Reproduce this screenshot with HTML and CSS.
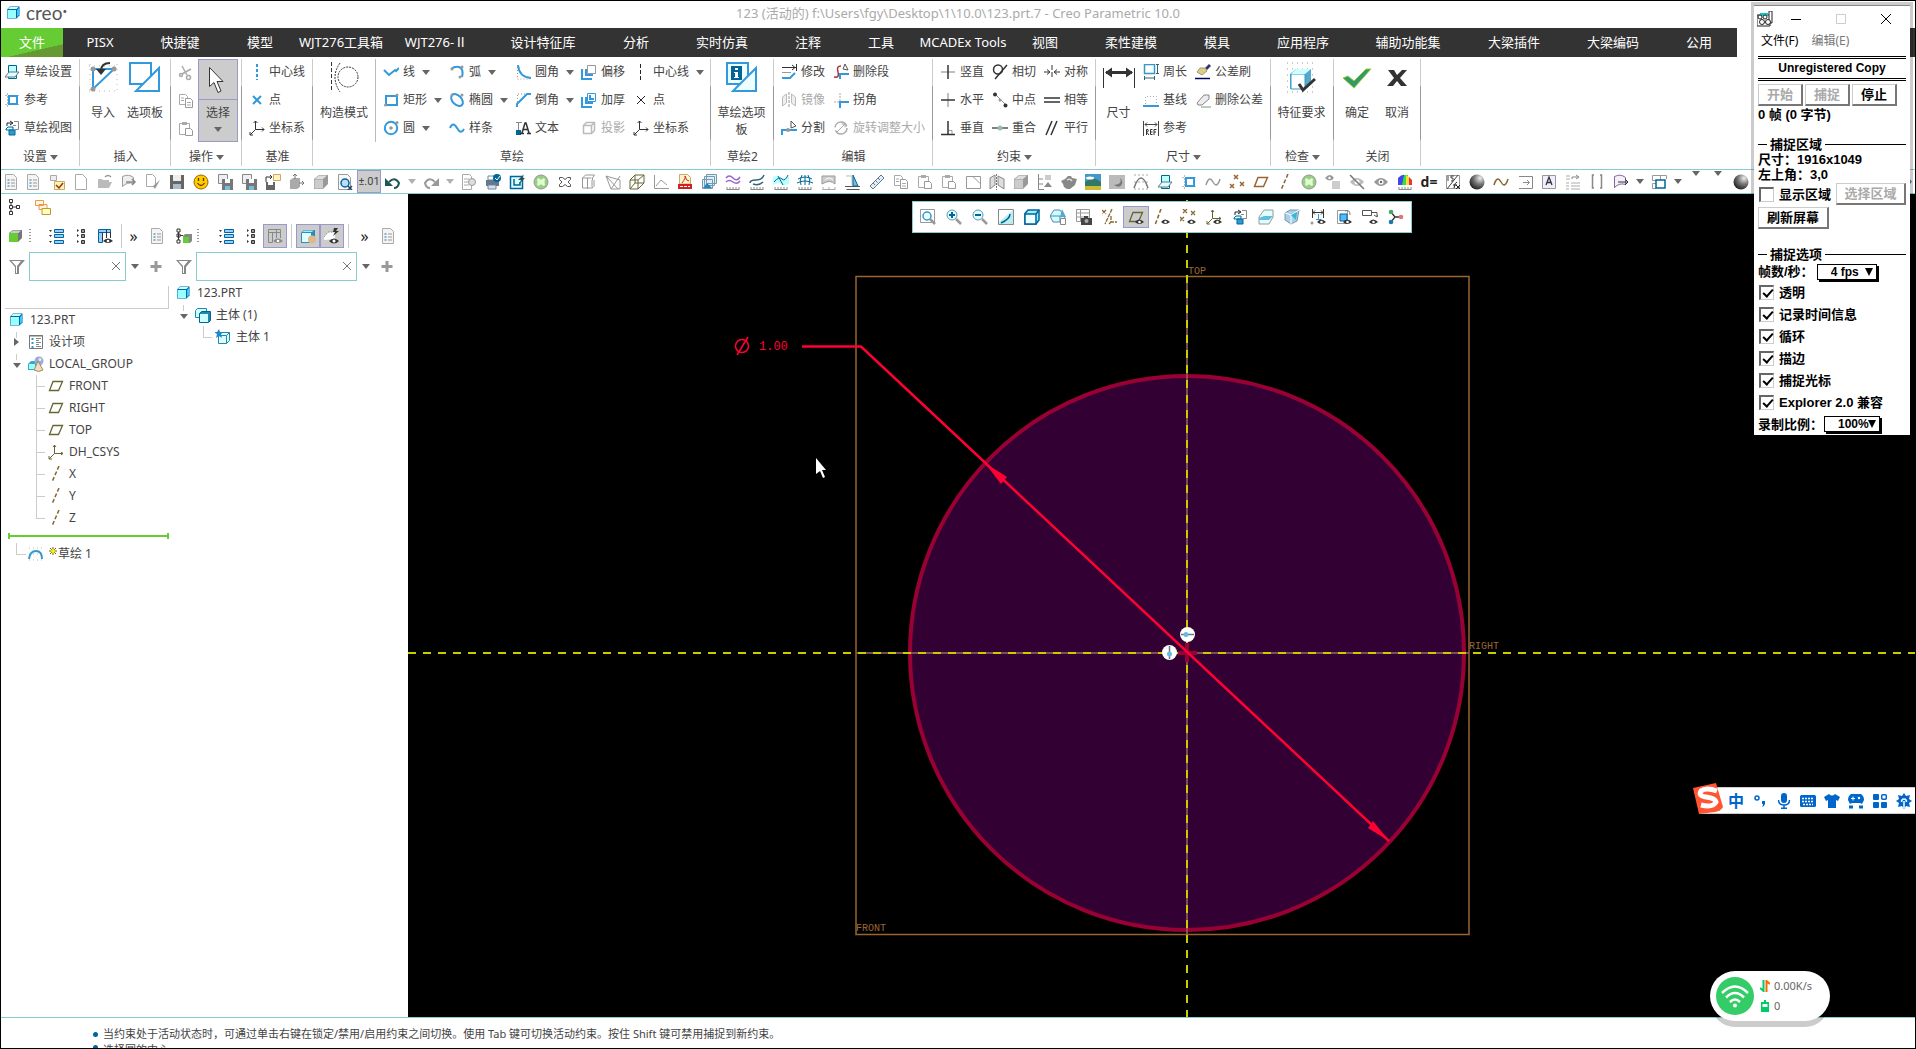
FILE: index.html
```html
<!DOCTYPE html>
<html lang="zh-CN">
  <head>
    <meta charset="UTF-8" />
    <title>Creo Parametric</title>
    <link rel="stylesheet" href="styles.css">
  </head>
  <body>
    <!-- icon sprite -->
    <svg class="sprite" aria-hidden="true">
      <symbol id="down" viewBox="0 0 8 5" preserveAspectRatio="none"><path d="M0 0h8L4 5z" fill="#666"/></symbol>
      <symbol id="cube" viewBox="0 0 16 16"><path d="M1 4.500L4 1.500h9.500v9l-3 3H1z" fill="#06a"/><path d="M1.500 5h8.500v8H1.500z" fill="#9ff"/><path d="M2 4l2-2h8.500L10.500 4z" fill="#cff"/><path d="M11 5l2-2v7l-2 2z" fill="#3cf"/></symbol>
      <symbol id="setup" viewBox="0 0 16 16"><path d="M4.500 1.500h8v13h-8z" fill="#bff" stroke="#069"/><path d="M5 8h10l-4 5H1z" fill="#dff" stroke="#678"/></symbol>
      <symbol id="refs" viewBox="0 0 16 16"><path d="M1 3.500h14M1 12.500h14M3.500 1v14" stroke="#bbb" stroke-dasharray="2 1"/><path d="M5 4h8v8H5z" fill="#fff" stroke="#39d" stroke-width="2"/></symbol>
      <symbol id="sview" viewBox="0 0 16 16"><path d="M3 6V3h5M6 1l3 2-3 2" fill="none" stroke="#222"/><path d="M10 1.500h4.500v8H11M12 5.500h-3" fill="none" stroke="#888"/><path d="M2 9l2-2h5v3H2z" fill="#cff" stroke="#069"/><path d="M5 10h6v5H5z" fill="#39c" stroke="#069"/></symbol>
      <symbol id="import" viewBox="0 0 32 32"><path d="M2 5h29M2 30h29M3 3v28M30 3v28" stroke="#bbb" stroke-dasharray="1 4"/><path d="M6 8h21L6 28z" fill="none" stroke="#39d" stroke-width="2"/><g fill="#999"><circle cx="6" cy="8" r="2.500"/><circle cx="27" cy="8" r="2.500"/><circle cx="6" cy="28" r="2.500"/></g><path d="M23 2q-9 0-9 8" fill="none" stroke="#333" stroke-width="2"/><path d="M9 8h10l-5 6z" fill="#333"/></symbol>
      <symbol id="palette" viewBox="0 0 32 32"><path d="M1 2h21v21H1z" fill="#fff" stroke="#39d" stroke-width="2"/><path d="M30 7v23H7z" fill="#fff" stroke="#39d" stroke-width="2"/></symbol>
      <symbol id="palette-i" viewBox="0 0 32 32"><path d="M1 2h21v21H1z" fill="#eff" stroke="#39d" stroke-width="2"/><path d="M30 7v23H7z" fill="#eff" stroke="#39d" stroke-width="2"/><path d="M5 5h11v14H5z" fill="#069"/><path d="M9 7h3v2H9zM8 11h4v5h1v1H8v-1h1v-4H8z" fill="#fff"/></symbol>
      <symbol id="cut" viewBox="0 0 16 16"><g fill="none" stroke="#aaa" stroke-width="1.500"><path d="M4 1l5 9M13 4L4 9"/><circle cx="10.500" cy="12.500" r="2"/><circle cx="3" cy="10" r="1.500"/></g></symbol>
      <symbol id="copy" viewBox="0 0 16 16"><path d="M1.500 1.500h6l2 2v8h-8z" fill="#fff" stroke="#aaa"/><path d="M7.500 5.500h5l2 2v7h-7z" fill="#fff" stroke="#999"/><path d="M3 5h3M3 7.500h3M9 9.500h4M9 12h4" stroke="#aaa"/></symbol>
      <symbol id="paste" viewBox="0 0 16 16"><path d="M1.500 2.500h10v11h-10z" fill="#fff" stroke="#aaa"/><path d="M4 1h5v3H4z" fill="#aaa"/><path d="M7.500 7.500h5l2 2v5h-7z" fill="#fff" stroke="#999"/></symbol>
      <symbol id="pointer" viewBox="0 0 16 28"><path d="M1.500 1.500v19l4.500-4 4 10 3-1.500-4-9.500h6z" fill="#fff" stroke="#333"/></symbol>
      <symbol id="cline" viewBox="0 0 16 16"><path d="M8 0v16" stroke="#39d" stroke-width="2" stroke-dasharray="3 2"/></symbol>
      <symbol id="cline-k" viewBox="0 0 16 16"><path d="M7.500 0v16" stroke="#222" stroke-width="1" stroke-dasharray="4 2"/></symbol>
      <symbol id="pt" viewBox="0 0 16 16"><path d="M4 4l8 8M12 4l-8 8" stroke="#39d" stroke-width="2"/></symbol>
      <symbol id="pt-k" viewBox="0 0 16 16"><path d="M4 4l8 8M12 4l-8 8" stroke="#222"/></symbol>
      <symbol id="csys" viewBox="0 0 16 16"><path d="M6.500 1v8.500H15M6.500 9.500L1 15M4.500 3l2-2 2 2M13 7.500l2 2-2 2M1 12v3h3" fill="none" stroke="#333"/></symbol>
      <symbol id="csys-o" viewBox="0 0 16 16"><path d="M6.500 1v8.500H15M6.500 9.500L1 15M5 3l1.500-2L8 3M13 8l2 1.500-2 1.500M1 12v3h3" fill="none" stroke="#663"/></symbol>
      <symbol id="constr" viewBox="0 0 32 32"><g fill="none" stroke="#333" stroke-dasharray="2 1"><path d="M3.500 1v30" stroke-dasharray="4 2"/><path d="M12 2q-10 14 0 29"/><circle cx="20" cy="16" r="10"/></g></symbol>
      <symbol id="line" viewBox="0 0 16 16"><path d="M1 6l5 5 6-5 0 0 1 1 3-3" fill="none" stroke="#39d" stroke-width="2"/></symbol>
      <symbol id="arc" viewBox="0 0 16 16"><path d="M2 5q4-3 8-2 5 2 3 10" fill="none" stroke="#39d" stroke-width="2"/><g fill="#999"><circle cx="3" cy="5" r="1.500"/><circle cx="13" cy="3" r="1.500"/><circle cx="11" cy="13" r="1.500"/></g></symbol>
      <symbol id="fillet" viewBox="0 0 16 16"><path d="M2.500 3v12H15" fill="none" stroke="#999" stroke-dasharray="1 2"/><path d="M3 1q1 12 13 13" fill="none" stroke="#39d" stroke-width="2"/></symbol>
      <symbol id="chamfer" viewBox="0 0 16 16"><path d="M3 2h12M2.500 3v12" fill="none" stroke="#999" stroke-dasharray="1 2"/><path d="M2 15v-3L12 2h4" fill="none" stroke="#39d" stroke-width="2"/></symbol>
      <symbol id="offset" viewBox="0 0 16 16"><path d="M6.500 1.500h8v8h-8z" fill="none" stroke="#999"/><path d="M5 5v6h7M1 5v10h10" fill="none" stroke="#39d" stroke-width="2"/></symbol>
      <symbol id="thick" viewBox="0 0 16 16"><path d="M6.500 1.500h8v8h-8z" fill="none" stroke="#39d"/><path d="M5 5v6h7M1 5v10h10M9 3v4h4" fill="none" stroke="#39d" stroke-width="2"/></symbol>
      <symbol id="rect" viewBox="0 0 16 16"><path d="M3 4h11v9H3z" fill="none" stroke="#39d" stroke-width="2"/><circle cx="14" cy="3" r="1.500" fill="#999"/><circle cx="2.500" cy="13" r="1.500" fill="#999"/></symbol>
      <symbol id="ellipse" viewBox="0 0 16 16"><ellipse cx="8" cy="8" rx="7" ry="4.500" transform="rotate(45 8 8)" fill="none" stroke="#39d" stroke-width="2"/><circle cx="3" cy="3" r="1.500" fill="#999"/><circle cx="13" cy="3" r="1.500" fill="#999"/></symbol>
      <symbol id="circle" viewBox="0 0 16 16"><circle cx="8" cy="8" r="6.200" fill="none" stroke="#39d" stroke-width="2"/><circle cx="8" cy="8" r="1.800" fill="#999"/><circle cx="14" cy="2.500" r="1.500" fill="#999"/></symbol>
      <symbol id="spline" viewBox="0 0 16 16"><path d="M1 8q3-7 7 0 4 7 7 1" fill="none" stroke="#39d" stroke-width="2"/></symbol>
      <symbol id="text" viewBox="0 0 16 16"><path d="M1 2.500h6M3.500 3v8" stroke="#888"/><path d="M1 10h5v5H1z" fill="#069"/><path d="M5 13.500h4M7 13l3-10 1 0 3 10M12 13.500h4M8 9.500h5" fill="none" stroke="#333" stroke-width="1.500"/></symbol>
      <symbol id="project" viewBox="0 0 16 16"><path d="M2.500 5.500h8v8h-8zM2.500 5.500l3-3h8v8l-3 3M10.500 5.500l3-3" fill="none" stroke="#bbb" stroke-width="1.500"/></symbol>
      <symbol id="modify" viewBox="0 0 16 16"><path d="M1 3.500h14M11 1l3 2.500L11 6M15.500 0v7" fill="none" stroke="#333"/><path d="M1 8.500h9" stroke="#999"/><path d="M1 14h8l5-5" fill="none" stroke="#39d" stroke-width="2"/></symbol>
      <symbol id="mirror" viewBox="0 0 16 16"><path d="M1.500 5l4-3v9l-4 3zM14.500 5l-4-3v9l4 3z" fill="#eee" stroke="#bbb"/><path d="M8 0v16" stroke="#999" stroke-dasharray="3 1"/></symbol>
      <symbol id="divide" viewBox="0 0 16 16"><path d="M1 15v-5h5" fill="none" stroke="#39d" stroke-width="2"/><path d="M8 10h8" stroke="#39d" stroke-width="2"/><circle cx="7" cy="10" r="2" fill="#999"/><path d="M10 1l5 5-5 2z" fill="#fff" stroke="#555"/></symbol>
      <symbol id="delseg" viewBox="0 0 16 16"><path d="M1 13q6 1 4-5t3-6" fill="none" stroke="#a33" stroke-width="1.500"/><path d="M7 15v-5h9" fill="none" stroke="#39d" stroke-width="2"/><path d="M12 0l3 6-5-1z" fill="#fff" stroke="#555"/></symbol>
      <symbol id="corner" viewBox="0 0 16 16"><path d="M1 10h6M7 1v8" stroke="#aaa" stroke-dasharray="2 1"/><path d="M7 16v-6h9" fill="none" stroke="#39d" stroke-width="2"/></symbol>
      <symbol id="rotate" viewBox="0 0 16 16"><circle cx="8" cy="8" r="6" fill="none" stroke="#aaa" stroke-width="1.500" stroke-dasharray="16 3"/><path d="M4 12l8-8M8.500 4H12v3.500" fill="none" stroke="#aaa"/></symbol>
      <symbol id="vert" viewBox="0 0 16 16"><path d="M1 8h14" stroke="#aaa" stroke-width="1.500"/><path d="M8 1v14" stroke="#333" stroke-width="1.500"/></symbol>
      <symbol id="horz" viewBox="0 0 16 16"><path d="M8 1v14" stroke="#aaa" stroke-width="1.500"/><path d="M1 8h14" stroke="#333" stroke-width="1.500"/></symbol>
      <symbol id="perp" viewBox="0 0 16 16"><path d="M8 1v14M1 14.500h14" stroke="#333" stroke-width="1.500"/><path d="M9 10.500h3V14" fill="none" stroke="#999"/></symbol>
      <symbol id="tangent" viewBox="0 0 16 16"><circle cx="6" cy="5.500" r="4.500" fill="none" stroke="#333" stroke-width="1.500"/><path d="M3 15L15 1" stroke="#333" stroke-width="1.500"/></symbol>
      <symbol id="mid" viewBox="0 0 16 16"><path d="M3 2l11 11" stroke="#888"/><circle cx="3" cy="2.500" r="2" fill="#333"/><circle cx="13.500" cy="13.500" r="2" fill="#333"/><circle cx="8" cy="8" r="1.500" fill="#999"/></symbol>
      <symbol id="coin" viewBox="0 0 16 16"><path d="M0 8h16" stroke="#555" stroke-width="1.500"/><circle cx="8" cy="8" r="2.500" fill="#9bb"/></symbol>
      <symbol id="sym" viewBox="0 0 16 16"><path d="M8 1v14" stroke="#333" stroke-dasharray="5 2"/><path d="M0 8h5M16 8h-5M3 5.500L6 8l-3 2.500M13 5.500L10 8l3 2.500" fill="none" stroke="#333"/></symbol>
      <symbol id="equal" viewBox="0 0 16 16"><path d="M0 6h16M0 10h16" stroke="#333" stroke-width="1.500"/></symbol>
      <symbol id="para" viewBox="0 0 16 16"><path d="M2 15L8 1M7 15l6-14" stroke="#333" stroke-width="1.500"/></symbol>
      <symbol id="dim" viewBox="0 0 32 32"><path d="M.5 7v20M31.500 7v20" stroke="#333"/><path d="M3 11.500h26" stroke="#333" stroke-width="3"/><path d="M2 11.500l7-5v10zM30 11.500l-7-5v10z" fill="#333"/></symbol>
      <symbol id="perim" viewBox="0 0 16 16"><path d="M1.500.5h10v9h-10z" fill="none" stroke="#39c" stroke-width="1.500"/><path d="M13 .5h3M13 9.500h3M14.500 1v8M1.500 12v4M11.500 12v4M2 14h9" stroke="#366"/></symbol>
      <symbol id="base" viewBox="0 0 16 16"><path d="M2.500 12V4.500h11V12" fill="none" stroke="#aaa" stroke-dasharray="1 2"/><path d="M0 14h16" stroke="#39d" stroke-width="2"/></symbol>
      <symbol id="ref" viewBox="0 0 16 16"><path d="M.5 1v15M15.500 1v15M2 4.500h12M4 2.500l-2 2 2 2M12 2.500l2 2-2 2" fill="none" stroke="#444"/><path d="M3.500 15V9.500H5q1 1.500-1 3l2 2.500M9.500 9.500H7.500V14.500h2M7.500 12h2M13.500 9.500h-2.500v5.500M11 12h2" fill="none" stroke="#333"/></symbol>
      <symbol id="brush" viewBox="0 0 16 16"><path d="M14 0l2 2-4 4-2-2z" fill="#336"/><path d="M5 4h5l2 3-5 4-5-3z" fill="#dc8" stroke="#997"/><path d="M0 14.500h15" stroke="#006" stroke-width="1.500"/></symbol>
      <symbol id="eraser" viewBox="0 0 16 16"><path d="M2 11l7-8h5v4l-7 6H3z" fill="#edeaf2" stroke="#888"/><path d="M6 15h10" stroke="#797"/></symbol>
      <symbol id="feat" viewBox="0 0 32 32"><path d="M1 2h30M1 8h30M1 14h30M1 20h30M1 26h30M1 31h30" stroke="#999" stroke-dasharray="1 4"/><path d="M4 13l6-5h15v14l-6 6H4z" fill="#5ac"/><path d="M5 13h14v15H5z" fill="#fff" stroke="#39c"/><path d="M5 13l5-5h15l-6 5z" fill="#cff"/><path d="M13 23l4 6 12-11" fill="none" stroke="#333" stroke-width="3"/></symbol>
      <symbol id="ok" viewBox="0 0 32 32"><path d="M2 17l5-2 6 5L25 8l5 0-17 19z" fill="#396" stroke="#9c3"/></symbol>
      <symbol id="cancel" viewBox="0 0 32 32"><path d="M7 9h6l3 5 5-5h5l-7 8 7 8h-6l-4-5-4 5H6l7-8z" fill="#333"/></symbol>
      <symbol id="list-doc" viewBox="0 0 16 16"><path d="M2.500.5h8l3 3v12h-11z" fill="#f4f4f4" stroke="#aaa"/><path d="M4.500 6h2M4.500 9h2M4.500 12h2" stroke="#69b" stroke-width="1.500"/><path d="M8 6h4M8 9h4M8 12h4" stroke="#999"/></symbol>
      <symbol id="list-check" viewBox="0 0 16 16"><path d="M1.500 1.500h6v5h-6z" fill="#eee" stroke="#aaa"/><path d="M5.500 7.500h10v8h-10z" fill="#fff3c0" stroke="#ca6"/><path d="M7 11l3 3 4-5" fill="none" stroke="#930" stroke-width="1.500"/></symbol>
      <symbol id="new" viewBox="0 0 16 16"><path d="M2.500.5h7l4 4v11h-11z" fill="#fff" stroke="#aaa"/></symbol>
      <symbol id="open" viewBox="0 0 16 16"><path d="M1 14V5h4l1 1h6v2l3 0-3 6z" fill="#bbb"/><path d="M8 3q3-3 6 0" fill="none" stroke="#999" stroke-width="1.500"/></symbol>
      <symbol id="send" viewBox="0 0 16 16"><path d="M1.500 2.500q6-3 11 1v6q-6-2-11 3z" fill="#eee" stroke="#999"/><path d="M5 8h9M11 5l3 3-3 3" fill="none" stroke="#888" stroke-width="1.500"/></symbol>
      <symbol id="newbrush" viewBox="0 0 16 16"><path d="M1.500.5h6l3 3v9h-9z" fill="#fff" stroke="#aaa"/><path d="M15 6l-5 9-2-3z" fill="#999"/></symbol>
      <symbol id="save" viewBox="0 0 16 16"><path d="M1 1h14v14H1z" fill="#666"/><path d="M4 1h8v6H4z" fill="#eee"/><path d="M4 10h8v5H4z" fill="#abc"/></symbol>
      <symbol id="smile" viewBox="0 0 16 16"><circle cx="8" cy="8" r="7" fill="#fc0" stroke="#960"/><path d="M4.500 9q3.500 5 7 0M5.500 4v3M10.500 4v3" fill="none" stroke="#630" stroke-width="1.300"/></symbol>
      <symbol id="save2" viewBox="0 0 16 16"><path d="M1.500.5h9v9h-9z" fill="#eee" stroke="#888"/><path d="M5 5h11v11H5z" fill="#777"/><path d="M8 5h5v4H8z" fill="#fff"/><path d="M8 12h5v4H8z" fill="#7bd"/></symbol>
      <symbol id="save3" viewBox="0 0 16 16"><path d="M1 8V3h6M5 1l2 2-2 2" fill="none" stroke="#333"/><path d="M8.500.5h7v6h-7z" fill="#fff3c0" stroke="#ca6"/><path d="M1 8h9v8H1z" fill="#666"/><path d="M3 8h5v3H3z" fill="#fff"/></symbol>
      <symbol id="boxarr" viewBox="0 0 16 16"><path d="M1 6l3-2h7v9l-3 2H1z" fill="#aaa"/><path d="M6 5V0M4 2l2-2 2 2M10 9h5M13 7l2 2-2 2" fill="none" stroke="#777"/></symbol>
      <symbol id="box" viewBox="0 0 16 16"><path d="M1 5l5-4h9v9l-5 5H1z" fill="#999"/><path d="M1.500 5.500h8.500v9H1.500z" fill="#ccc"/><path d="M2 5l4-3.500h8L10 5z" fill="#ddd"/></symbol>
      <symbol id="preview" viewBox="0 0 16 16"><path d="M1.500.5h9l3 3v12h-12z" fill="#f8f8f8" stroke="#999"/><circle cx="8" cy="9" r="4" fill="#bdf" stroke="#069" stroke-width="1.500"/><path d="M11 12l4 4M11 16l4-4" stroke="#246" stroke-width="1.500"/></symbol>
      <symbol id="undo" viewBox="0 0 16 16"><path d="M4 8q6-6 10 1-1 5-5 5" fill="none" stroke="#255" stroke-width="2"/><path d="M0 4v8h8z" fill="#255"/></symbol>
      <symbol id="redo" viewBox="0 0 16 16"><path d="M12 8Q6 2 2 9q1 5 5 5" fill="none" stroke="#999" stroke-width="2"/><path d="M16 4v8H8z" fill="#999"/></symbol>
      <symbol id="gdoc" viewBox="0 0 16 16"><path d="M1.500.5h7l2 2v13h-9z" fill="#fff" stroke="#aaa"/><path d="M3 5h5M3 8h4M3 11h5" stroke="#aaa"/><circle cx="11" cy="8" r="3.500" fill="#ddd" stroke="#999"/></symbol>
      <symbol id="print" viewBox="0 0 16 16"><path d="M3 2h7v4H3z" fill="#fff" stroke="#68a"/><path d="M1 6h13v6H1z" fill="#678"/><path d="M3 11h8v4H3z" fill="#dde" stroke="#68a"/><circle cx="12" cy="4" r="4" fill="#069"/><path d="M10 4l2 2 3-4" fill="none" stroke="#fff"/></symbol>
      <symbol id="regen" viewBox="0 0 16 16"><path d="M1.500 2.500h12v12h-12z" fill="#dff" stroke="#069" stroke-width="1.500"/><path d="M5 5v6h6V8" fill="none" stroke="#069" stroke-width="1.500"/><path d="M15 0l-6 6h3l-2 4 6-6h-3z" fill="#255"/></symbol>
      <symbol id="gball" viewBox="0 0 16 16"><circle cx="8" cy="8" r="7" fill="#9c8" stroke="#999"/><path d="M4 5q2-2 4 1 2-3 4-1-1 3 0 6-2 2-4-1-2 3-4 1 1-3 0-6z" fill="#dfc"/></symbol>
      <symbol id="xout" viewBox="0 0 16 16"><path d="M2.500 3.500h3l2.500 2 2.500-2h3v2L11 8l2.500 2.500v2h-3l-2.500-2-2.500 2h-3v-2L5 8 2.500 5.500z" fill="#fff" stroke="#555"/></symbol>
      <symbol id="gbook" viewBox="0 0 16 16"><path d="M1.500 4l3-3h9l-2 3v10h-10zM6.500 4v11M1.500 4h9" fill="none" stroke="#999"/><path d="M10 6h4v7h-4z" fill="#ccc"/></symbol>
      <symbol id="gtri" viewBox="0 0 16 16"><path d="M1 2l14 4v9H6zM1 2l12 13M15 2L6 15" fill="none" stroke="#999"/></symbol>
      <symbol id="wire" viewBox="0 0 16 16"><path d="M6 1h9v8H6zM1 6h8v9H1zM6 1L1 6M15 1L9 6M15 9l-6 6M6 9l-5 6" fill="none" stroke="#663"/></symbol>
      <symbol id="graph" viewBox="0 0 16 16"><path d="M1.500 1v13.500H16M3 12l5-6 6 5" fill="none" stroke="#999"/></symbol>
      <symbol id="pdf" viewBox="0 0 16 16"><path d="M2.500.5h8l3 3V10h-11z" fill="#fff5cc" stroke="#ca6"/><path d="M5 9q4-5 3-7 1 5 4 5" fill="none" stroke="#c22"/><path d="M1 10h14v5H1z" fill="#c22"/><path d="M3 12.500h10" stroke="#fff" stroke-dasharray="3 1"/></symbol>
      <symbol id="pics" viewBox="0 0 16 16"><path d="M5.500.5h10v9h-10zM3.500 2.500h10v9h-10zM1.500 5.500h10v9h-10z" fill="#def" stroke="#79a"/><path d="M2 14l4-5 5 5z" fill="#28b"/></symbol>
      <symbol id="curve1" viewBox="0 0 16 16"><path d="M1 4q3-4 7 0t7-1M1 8q3-3 7 0t7-1" fill="none" stroke="#96c" stroke-width="1.500"/><path d="M1.500 15.500h13M2 13v2M5 13v2M8 13v2M11 13v2M14 13v2" stroke="#888"/></symbol>
      <symbol id="curve2" viewBox="0 0 16 16"><path d="M1 9q0-3 6-3t8-5M4 10q6 2 10-2" fill="none" stroke="#367" stroke-width="1.500"/><path d="M1.500 15.500h13M2 13v2M5 13v2M8 13v2M11 13v2M14 13v2" stroke="#888"/></symbol>
      <symbol id="curve3" viewBox="0 0 16 16"><path d="M0 3q4-3 7 0t9-1v8q-4 2-8 0t-8 1z" fill="#bff"/><path d="M1 8q5-6 8-3t6-4M5 2l5 9" fill="none" stroke="#069"/><path d="M1.500 15.500h13M2 13v2M5 13v2M8 13v2M11 13v2M14 13v2" stroke="#888"/></symbol>
      <symbol id="mesh" viewBox="0 0 16 16"><path d="M1 5q7-4 14 0M0 9q8-4 16 0M5 1q-3 5-1 10M8 1v10M11 1q3 5 1 10" fill="none" stroke="#069"/><path d="M1.500 15.500h13M2 13v2M5 13v2M8 13v2M11 13v2M14 13v2" stroke="#888"/></symbol>
      <symbol id="gsurf" viewBox="0 0 16 16"><path d="M1 2h13v8q-5-5-13 0z" fill="#ccc" stroke="#999"/><path d="M4 6q4-4 8 0" fill="none" stroke="#fff"/><path d="M1.500 15.500h13M2 13v2M8 13v2M14 13v2" stroke="#aaa"/></symbol>
      <symbol id="draft" viewBox="0 0 16 16"><path d="M1 2h6v9" fill="none" stroke="#bbb"/><path d="M8 1l5 11H8z" fill="#7bd" stroke="#069"/><path d="M0 12.500h15M1.500 15.500h13" stroke="#555"/></symbol>
      <symbol id="ruler" viewBox="0 0 16 16"><path d="M1 12L12 1l3 3L4 15z" fill="#def" stroke="#678"/><path d="M4 9l2 2M6.500 6.500l2 2M9 4l2 2" stroke="#678"/></symbol>
      <symbol id="gsq" viewBox="0 0 16 16"><path d="M1.500 2.500h14v12h-14zM8 2.500l7 7" fill="none" stroke="#999"/></symbol>
      <symbol id="gmir" viewBox="0 0 16 16"><path d="M1 4l5-3v10l-5 4zM9 2l6 3v10l-6-4z" fill="#ddd" stroke="#888"/><path d="M7.500 0v16" stroke="#777" stroke-dasharray="2 1"/></symbol>
      <symbol id="gtree" viewBox="0 0 16 16"><path d="M1.500 0v15.500H7M1 5h5M1 10h5" fill="none" stroke="#888"/><path d="M8 1h6v5H8z" fill="#ccc"/><path d="M7 13l4-5 4 5z" fill="#888"/></symbol>
      <symbol id="teapot" viewBox="0 0 16 16"><path d="M0 7l4-2 3-3h3l1 2 5 1-2 6-5 4H6l-3-2-1-3z" fill="#888"/><path d="M6 6q3-2 5 1" fill="none" stroke="#ddd" stroke-width="1.500"/></symbol>
      <symbol id="photo" viewBox="0 0 16 16"><path d="M0 0h16v16H0z" fill="#49c"/><path d="M0 8q8-7 16 0v4H0z" fill="#376"/><ellipse cx="5" cy="4" rx="4" ry="1.500" fill="#fff"/><path d="M0 12h16v4H0z" fill="#cb3"/></symbol>
      <symbol id="moon" viewBox="0 0 16 16"><path d="M0 1h16v14H0z" fill="#bbb"/><path d="M11 4q3 6-6 7 6 4 8-1 1-4-2-6z" fill="#777"/></symbol>
      <symbol id="gspl" viewBox="0 0 16 16"><path d="M1 1h14M1 15h14M1 8h14" stroke="#aaa" stroke-dasharray="2 2"/><path d="M1 14Q8-6 15 14" fill="none" stroke="#777" stroke-width="1.500"/></symbol>
      <symbol id="gwave" viewBox="0 0 16 16"><path d="M1 11q3-10 7-3t7-3" fill="none" stroke="#999" stroke-width="1.500"/></symbol>
      <symbol id="bwave" viewBox="0 0 16 16"><path d="M1 11q3-10 7-3t7-3" fill="none" stroke="#863" stroke-width="1.500"/></symbol>
      <symbol id="pts" viewBox="0 0 16 16"><path d="M5 1l4 4M9 1L5 5M1 10l4 4M5 10l-4 4M11 8l4 4M15 8l-4 4" stroke="#963" stroke-width="1.500"/></symbol>
      <symbol id="pts-o" viewBox="0 0 16 16"><path d="M3 0l4 4M7 0L3 4M0 8l4 4M4 8l-4 4M11 2l4 4M15 2l-4 4" stroke="#863" stroke-width="1.300"/></symbol>
      <symbol id="plane" viewBox="0 0 16 16"><path d="M5 3.500h9.500l-4 9H1.500z" fill="none" stroke="#963" stroke-width="1.500"/></symbol>
      <symbol id="plane-o" viewBox="0 0 16 16"><path d="M5 3.500h9.500l-4 9H1.500z" fill="none" stroke="#663" stroke-width="1.300"/></symbol>
      <symbol id="axis" viewBox="0 0 16 16"><path d="M11 0L4 16" stroke="#863" stroke-width="1.500" stroke-dasharray="4 2"/></symbol>
      <symbol id="axis-o" viewBox="0 0 16 16"><path d="M7 0L1 16" stroke="#863" stroke-width="1.500" stroke-dasharray="4 2"/></symbol>
      <symbol id="geye" viewBox="0 0 16 16"><path d="M1 8q7-8 14 0-7 8-14 0z" fill="#999"/><circle cx="8" cy="8" r="2.500" fill="#fff"/><circle cx="8" cy="8" r="1.200" fill="#666"/></symbol>
      <symbol id="geye-x" viewBox="0 0 16 16"><path d="M1 8q7-8 14 0-7 8-14 0z" fill="#bbb"/><circle cx="8" cy="8" r="2.500" fill="#fff"/><path d="M1 1l14 14" stroke="#777" stroke-width="1.500"/></symbol>
      <symbol id="geye-b" viewBox="0 0 16 16"><path d="M0 4q5-6 9 0-4 5-9 0z" fill="#999"/><circle cx="4.500" cy="4" r="1.200" fill="#fff"/><path d="M7 7h8v8H7z" fill="#ccc"/></symbol>
      <symbol id="rainbow" viewBox="0 0 16 16"><path d="M1 11V4q4-4 7-3l-2 10z" fill="#44e"/><path d="M5 11l2-10 4 0v10z" fill="#3d4"/><path d="M9 11V1l4 3v7z" fill="#fd3"/><path d="M12 11V3l3 3v5z" fill="#e33"/><path d="M1.500 15.500h13M2 13v2M5 13v2M8 13v2M11 13v2M14 13v2" stroke="#888"/></symbol>
      <symbol id="fx" viewBox="0 0 16 16"><path d="M1.500 1.500h13v13h-13z" fill="#fff" stroke="#999"/><path d="M13 1L2 15M3 2v5M6 2h3M6 2v2h2v3H6" fill="none" stroke="#444"/><path d="M9 14q1-6 3-6M8 11h4M11 11l4 4M15 11l-4 4" fill="none" stroke="#222"/></symbol>
      <radialGradient id="ballfill" cx=".7" cy=".25" r=".8"><stop offset="0" stop-color="#eee"/><stop offset=".5" stop-color="#777"/><stop offset="1" stop-color="#222"/></radialGradient>
      <symbol id="ball" viewBox="0 0 16 16"><circle cx="8" cy="8" r="7.500" fill="url(#ballfill)"/></symbol>
      <symbol id="exit" viewBox="0 0 16 16"><path d="M2 2.500h13.500v12H2M6 8.500h6M10 6l2.500 2.500L10 11" fill="none" stroke="#888"/></symbol>
      <symbol id="abox" viewBox="0 0 16 16"><path d="M1.500 1.500h13v13h-13z" fill="#eef" stroke="#999"/><path d="M5 11l3-8 3 8M6 8.500h4" fill="none" stroke="#333" stroke-width="1.300"/></symbol>
      <symbol id="glist" viewBox="0 0 16 16"><path d="M1 2h4M1 5h4M1 9h3M6 9h9M1 12h3M6 12h9M1 15h3M6 15h9" stroke="#aaa"/><path d="M7 5V3h6M11 1l3 2-3 2" fill="none" stroke="#888"/></symbol>
      <symbol id="paren" viewBox="0 0 16 16"><path d="M5 1H3.500v13H5M11 1h1.500v13H11" fill="none" stroke="#888" stroke-width="1.500"/></symbol>
      <symbol id="flag" viewBox="0 0 16 16"><path d="M1.500 14V2.500q6-3 11 1v7q-6-2-11 3" fill="#f4f0fa" stroke="#869"/><path d="M5 8h10M12 5l3 3-3 3" fill="none" stroke="#333"/></symbol>
      <symbol id="wins" viewBox="0 0 16 16"><path d="M1.500 1.500h8v5h-8zM5 14.500h-3.500v-5H5M8 1.500h7.500V5" fill="none" stroke="#999"/><path d="M5 6h9v8H5z" fill="#fff" stroke="#069" stroke-width="1.500"/></symbol>
      <symbol id="struct" viewBox="0 0 16 16"><path d="M2.500.5h3v3h-3zM2.500 6.500h3v3h-3zM2.500 12.500h3v3h-3zM9.500 6.500h3v3h-3zM4 3.500v3M4 9.500v3M5.500 8h4" fill="none" stroke="#333"/></symbol>
      <symbol id="layers" viewBox="0 0 16 16"><path d="M.5 1.500h8v5h-8zM4 5.500h8v5H4z" fill="#fff4e8" stroke="#e94"/><path d="M7 9.500h8.500v6H7z" fill="#ffb" stroke="#b93"/></symbol>
      <symbol id="gcube" viewBox="0 0 16 16"><path d="M1 5l4-3h9v8l-4 4H1z" fill="#777"/><path d="M1 5h9v9H1z" fill="#6c3"/><path d="M2 5l3-2.500h8L10.500 5z" fill="#ccc"/></symbol>
      <symbol id="dots" viewBox="0 0 4 16"><path d="M2 1v15" stroke="#999" stroke-width="2" stroke-dasharray="1 2"/></symbol>
      <symbol id="rows" viewBox="0 0 16 16"><path d="M5.500 1.500h9v3h-9zM5.500 6.500h9v3h-9zM5.500 12.500h9v3h-9z" fill="#9cf" stroke="#069"/><path d="M0 2h3l-1.500 2zM0 7h3L1.500 9zM0 13h3l-1.500 2z" fill="#333"/></symbol>
      <symbol id="rowsm" viewBox="0 0 16 16"><path d="M8.500 1.500h3v3h-3zM8.500 6.500h3v3h-3zM8.500 12.500h3v3h-3z" fill="#999" stroke="#333"/><path d="M4 1v3l2-1.500zM4 6v3l2-1.500zM4 12v3l2-1.500z" fill="#333"/></symbol>
      <symbol id="cols" viewBox="0 0 16 16"><path d="M1.500 1.500h12v3h-12zM1.500 4.500h4v10h-4z" fill="#9cf" stroke="#069"/><path d="M5.500 4.500v8M9.500 2v8M13.500 4v6" stroke="#333"/><path d="M6 13q5-5 10 0-5 4-10 0z" fill="#333"/><circle cx="11" cy="13" r="1.300" fill="#fff"/></symbol>
      <symbol id="cols-g" viewBox="0 0 16 16"><path d="M1.500 1.500h12v3h-12zM1.500 4.500h4v10h-4zM9.500 2v8M13.500 4v6" fill="none" stroke="#888"/><path d="M6 13q5-5 10 0-5 4-10 0z" fill="#888"/><circle cx="11" cy="13" r="1.300" fill="#fff"/></symbol>
      <symbol id="stcube" viewBox="0 0 16 16"><path d="M1 1h3v3H1zM1 6h3v3H1zM1 12h3v3H1zM4 7.500h3M2.500 4v8" fill="none" stroke="#333"/><path d="M7 8l2-2h7v7l-2 2H7z" fill="#888"/><path d="M7 9h6v6H7z" fill="#6c3"/></symbol>
      <symbol id="cubeball" viewBox="0 0 16 16"><path d="M1 5l3-3h11v10l-3 3H1z" fill="#38b"/><path d="M2 5h9v9H2z" fill="#dff"/><path d="M2.500 4l2-1.500h9L12 4z" fill="#9ef"/><circle cx="12" cy="11.500" r="4" fill="#db8"/></symbol>
      <symbol id="cubeeye" viewBox="0 0 16 16"><path d="M0 12V8l4-4h7v7z" fill="#fff"/><path d="M0 9l4-5h6" fill="none" stroke="#888" stroke-dasharray="2 1"/><path d="M14 0h-4L9 4h2l-2 4 6-5h-3z" fill="#333"/><path d="M5 13q5-5 10 0-5 5-10 0z" fill="#333"/><circle cx="10" cy="13" r="1.500" fill="#fff"/></symbol>
      <symbol id="filter" viewBox="0 0 16 16"><path d="M0 1h16L10 8v7H6V8z" fill="#888"/><path d="M2.500 2H12L8 7v7H7V7z" fill="#fff"/></symbol>
      <symbol id="times" viewBox="0 0 16 16"><path d="M4 4l8 8M12 4l-8 8" stroke="#777"/></symbol>
      <symbol id="plus" viewBox="0 0 16 16"><path d="M8 2v11M2.500 7.500h11" stroke="#999" stroke-width="3"/></symbol>
      <symbol id="design" viewBox="0 0 16 16"><path d="M1.500 1.500h13v13h-13z" fill="#fff" stroke="#777"/><path d="M3.500 5h2M3.500 9h2M3.500 13h2" stroke="#39c" stroke-width="2"/><path d="M1 2h14" stroke="#777"/><path d="M8 4.500h5M8 6.500h3M8 8.500h5M8 10.500h3M8 12.500h5" stroke="#888"/></symbol>
      <symbol id="group" viewBox="0 0 16 16"><path d="M0 8l3-3h6v6l-2 3H0z" fill="#3ac"/><path d="M1 8h6v5H1z" fill="#9ff"/><circle cx="11" cy="5" r="4.500" fill="#9ad"/><circle cx="12" cy="3.500" r="1.500" fill="#dee"/><path d="M10 5l5 9q-4 3-9 0z" fill="#edb" stroke="#a86"/></symbol>
      <symbol id="bodies" viewBox="0 0 16 16"><path d="M.5 3.500l2-2h9v9h-11z" fill="#cff" stroke="#28a"/><path d="M4.500 6.500l2-2h9v9l-2 2h-9z" fill="#28a" stroke="#069"/><path d="M5 7h8v8H5z" fill="#cff"/></symbol>
      <symbol id="bodystar" viewBox="0 0 16 16"><path d="M3.500 6.500l3-3h8v8l-3 3h-8zM3.500 6.500h8v8M11.500 6.500l3-3" fill="#dff" stroke="#28a"/><path d="M4 0l1 3h4L6 5l1 4-3-2-3 2 1-4-3-2h3z" fill="#28c"/></symbol>
      <symbol id="sketch" viewBox="0 0 16 16"><path d="M1 2h15M1 14h15M1 8h15" stroke="#bbb" stroke-dasharray="1 3"/><path d="M1 13Q2 5 8 5t6 8" fill="none" stroke="#39c" stroke-width="2"/></symbol>
      <symbol id="star" viewBox="0 0 8 8"><path d="M4 0v8M0 4h8M1 1l6 6M7 1L1 7" stroke="#660"/><circle cx="4" cy="4" r="2" fill="#fe0"/></symbol>
      <symbol id="fit" viewBox="0 0 16 16"><path d="M.5.5h14v13H.5z" fill="#fff" stroke="#999"/><circle cx="7" cy="7" r="4" fill="#eff" stroke="#39c" stroke-width="1.500"/><path d="M10 10l5 5" stroke="#999" stroke-width="2.500"/></symbol>
      <symbol id="zin" viewBox="0 0 16 16"><circle cx="6" cy="6" r="5" fill="#dff" stroke="#69a"/><path d="M3 6h6M6 3v6" stroke="#069" stroke-width="2"/><path d="M10 10l5 5" stroke="#999" stroke-width="2.500"/></symbol>
      <symbol id="zout" viewBox="0 0 16 16"><circle cx="6" cy="6" r="5" fill="#dff" stroke="#69a"/><path d="M3 6h6" stroke="#069" stroke-width="2"/><path d="M10 10l5 5" stroke="#999" stroke-width="2.500"/></symbol>
      <symbol id="repaint" viewBox="0 0 16 16"><path d="M.5.5h15v15H.5z" fill="#bee" stroke="#888"/><path d="M1 1h14L1 13z" fill="#fff"/><path d="M3 14Q12 10 12 5" fill="none" stroke="#069" stroke-width="1.500"/></symbol>
      <symbol id="shade" viewBox="0 0 16 16"><path d="M1 4.500L4 1h11v10l-3 4H1z" fill="#9ef" stroke="#069" stroke-width="1.500"/><path d="M1 5h11v10H1zM12 5l3-4" fill="#eff" stroke="#069" stroke-width="1.500"/></symbol>
      <symbol id="orient" viewBox="0 0 16 16"><path d="M0 7l4-6h6l5 7-3 5H3z" fill="#cff" stroke="#58a"/><path d="M0 7h10v6" fill="none" stroke="#58a"/><path d="M12 0l4 8h-6z" fill="#5ac"/><path d="M10.500 9.500h5v6h-5z" fill="#fff" stroke="#888"/></symbol>
      <symbol id="camera" viewBox="0 0 16 16"><path d="M.5.5h13v12H.5zM1 4h13M1 8h13M4.500 1v12" fill="none" stroke="#999"/><path d="M5 9h11v7H5zM8 7h4v2H8z" fill="#444"/><circle cx="10.500" cy="12" r="2" fill="#aaa"/></symbol>
      <symbol id="datums" viewBox="0 0 16 16"><path d="M0 1l4 4M4 1L0 5M10 0L3 15M9 7v6h6M9 13l-2 2" fill="none" stroke="#863" stroke-width="1.300" stroke-dasharray="4 1"/></symbol>
      <symbol id="eye" viewBox="0 0 16 16"><path d="M7 13q4-5 9 0-5 4-9 0z" fill="#333"/><circle cx="11.500" cy="13" r="1.300" fill="#fff"/></symbol>
      <symbol id="section" viewBox="0 0 16 16"><path d="M1 8l5-7h9v7l-4 7H1z" fill="#dff" stroke="#999"/><path d="M1 9l5-2h9l-4 4H1z" fill="#6bd"/></symbol>
      <symbol id="persp" viewBox="0 0 16 16"><path d="M1 4l5-3h9l-2 11-6 3-6-4z" fill="#ace" stroke="#79a"/><path d="M1 4l6 2 8-5M7 6v9" fill="none" stroke="#fff"/><path d="M7 6l6-3-1 8z" fill="#3bc"/></symbol>
      <symbol id="dims" viewBox="0 0 16 16"><path d="M2.500 0v9M13.500 0v9M3 3.500h10M5 1.500l-2 2 2 2M11 1.500l2 2-2 2" fill="none" stroke="#333"/><path d="M8.500 5v5M6 10.500h5" stroke="#39c"/><circle cx="2" cy="14" r="1.500" fill="#999"/></symbol>
      <symbol id="part" viewBox="0 0 16 16"><path d="M1.500 1.500h10v13h-10z" fill="#fff" stroke="#999"/><path d="M4 5h7v7H4z" fill="#5bf" stroke="#069"/><path d="M9 2q5-2 5 4" fill="none" stroke="#777"/></symbol>
      <symbol id="note" viewBox="0 0 16 16"><path d="M.5 1.500h9v5h-9zM10 3.500h5v4M12 6l3 2 1-2" fill="none" stroke="#555"/></symbol>
      <symbol id="spin" viewBox="0 0 16 16"><path d="M3 3l4 5-4 5M7 8h6" fill="none" stroke="#333" stroke-width="1.300"/><circle cx="3" cy="3" r="2.300" fill="#4a6"/><circle cx="3" cy="13" r="2.300" fill="#27a"/><circle cx="13" cy="8" r="2.300" fill="#d77"/></symbol>
      <symbol id="gifcam" viewBox="0 0 16 16"><path d="M0 4h13v11H0z" fill="#fff" stroke="#222"/><path d="M3 2h8v2H3z" fill="#0cc"/><path d="M12 0h3v12h-3z" fill="#fff" stroke="#222"/><g fill="#fff" stroke="#222"><circle cx="3" cy="6" r="2"/><circle cx="8" cy="6" r="2"/><circle cx="5" cy="11" r="2.500"/><circle cx="11" cy="11" r="2.500"/></g></symbol>
    </svg>

    <header class="titlebar">
      <div class="brand">
        <svg class="i"><use href="#cube"/></svg>
        <span>creo<sup>•</sup></span>
      </div>
      <div class="doc-title">123 (活动的) f:\Users\fgy\Desktop\1\10.0\123.prt.7 - Creo Parametric 10.0</div>
    </header>

    <nav class="menu">
      <div class="tabs">
        <a href="#" class="file">文件</a>
        <a href="#">PISX</a>
        <a href="#">快捷键</a>
        <a href="#">模型</a>
        <a href="#">WJT276工具箱</a>
        <a href="#">WJT276-Ⅱ</a>
        <a href="#">设计特征库</a>
        <a href="#">分析</a>
        <a href="#">实时仿真</a>
        <a href="#">注释</a>
        <a href="#">工具</a>
        <a href="#">MCADEx Tools</a>
        <a href="#">视图</a>
        <a href="#">柔性建模</a>
        <a href="#">模具</a>
        <a href="#">应用程序</a>
        <a href="#">辅助功能集</a>
        <a href="#">大梁插件</a>
        <a href="#">大梁编码</a>
        <a href="#">公用</a>
      </div>
      <span class="menu-end"></span>
    </nav>

    <div class="ribbon">
      <section class="group g-setup">
        <div class="tools">
          <div class="col">
            <button><svg class="i"><use href="#setup"/></svg>草绘设置</button>
            <button><svg class="i"><use href="#refs"/></svg>参考</button>
            <button><svg class="i"><use href="#sview"/></svg>草绘视图</button>
          </div>
        </div>
        <div class="label">设置<svg class="d"><use href="#down"/></svg></div>
      </section>

      <section class="group g-insert">
        <div class="tools">
          <button class="big"><svg><use href="#import"/></svg>导入</button>
          <button class="big"><svg><use href="#palette"/></svg>选项板</button>
        </div>
        <div class="label">插入</div>
      </section>

      <section class="group g-ops">
        <div class="tools">
          <div class="col">
            <button aria-label="剪切"><svg class="i"><use href="#cut"/></svg></button>
            <button aria-label="复制"><svg class="i"><use href="#copy"/></svg></button>
            <button aria-label="粘贴"><svg class="i"><use href="#paste"/></svg></button>
          </div>
          <button class="select-btn"><span class="half"><svg class="ptr"><use href="#pointer"/></svg></span>选择<svg class="d"><use href="#down"/></svg></button>
        </div>
        <div class="label">操作<svg class="d"><use href="#down"/></svg></div>
      </section>

      <section class="group g-datum">
        <div class="tools">
          <div class="col">
            <button><svg class="i"><use href="#cline"/></svg>中心线</button>
            <button><svg class="i"><use href="#pt"/></svg>点</button>
            <button><svg class="i"><use href="#csys"/></svg>坐标系</button>
          </div>
        </div>
        <div class="label">基准</div>
      </section>

      <section class="group g-sketch">
        <div class="tools">
          <button class="big constr"><svg><use href="#constr"/></svg>构造模式</button>
          <div class="col">
            <button><svg class="i"><use href="#line"/></svg>线<svg class="d"><use href="#down"/></svg></button>
            <button><svg class="i"><use href="#rect"/></svg>矩形<svg class="d"><use href="#down"/></svg></button>
            <button><svg class="i"><use href="#circle"/></svg>圆<svg class="d"><use href="#down"/></svg></button>
          </div>
          <div class="col">
            <button><svg class="i"><use href="#arc"/></svg>弧<svg class="d"><use href="#down"/></svg></button>
            <button><svg class="i"><use href="#ellipse"/></svg>椭圆<svg class="d"><use href="#down"/></svg></button>
            <button><svg class="i"><use href="#spline"/></svg>样条</button>
          </div>
          <div class="col">
            <button><svg class="i"><use href="#fillet"/></svg>圆角<svg class="d"><use href="#down"/></svg></button>
            <button><svg class="i"><use href="#chamfer"/></svg>倒角<svg class="d"><use href="#down"/></svg></button>
            <button><svg class="i"><use href="#text"/></svg>文本</button>
          </div>
          <div class="col narrow">
            <button><svg class="i"><use href="#offset"/></svg>偏移</button>
            <button><svg class="i"><use href="#thick"/></svg>加厚</button>
            <button disabled><svg class="i"><use href="#project"/></svg>投影</button>
          </div>
          <div class="col">
            <button><svg class="i"><use href="#cline-k"/></svg>中心线<svg class="d"><use href="#down"/></svg></button>
            <button><svg class="i"><use href="#pt-k"/></svg>点</button>
            <button><svg class="i"><use href="#csys"/></svg>坐标系</button>
          </div>
        </div>
        <div class="label">草绘</div>
      </section>

      <section class="group g-sketch2">
        <div class="tools">
          <button class="big"><svg><use href="#palette-i"/></svg>草绘选项<br>板</button>
        </div>
        <div class="label">草绘2</div>
      </section>

      <section class="group g-edit">
        <div class="tools">
          <div class="col narrow">
            <button><svg class="i"><use href="#modify"/></svg>修改</button>
            <button disabled><svg class="i"><use href="#mirror"/></svg>镜像</button>
            <button><svg class="i"><use href="#divide"/></svg>分割</button>
          </div>
          <div class="col">
            <button><svg class="i"><use href="#delseg"/></svg>删除段</button>
            <button><svg class="i"><use href="#corner"/></svg>拐角</button>
            <button disabled><svg class="i"><use href="#rotate"/></svg>旋转调整大小</button>
          </div>
        </div>
        <div class="label">编辑</div>
      </section>

      <section class="group g-constrain">
        <div class="tools">
          <div class="col narrow">
            <button><svg class="i"><use href="#vert"/></svg>竖直</button>
            <button><svg class="i"><use href="#horz"/></svg>水平</button>
            <button><svg class="i"><use href="#perp"/></svg>垂直</button>
          </div>
          <div class="col narrow">
            <button><svg class="i"><use href="#tangent"/></svg>相切</button>
            <button><svg class="i"><use href="#mid"/></svg>中点</button>
            <button><svg class="i"><use href="#coin"/></svg>重合</button>
          </div>
          <div class="col narrow">
            <button><svg class="i"><use href="#sym"/></svg>对称</button>
            <button><svg class="i"><use href="#equal"/></svg>相等</button>
            <button><svg class="i"><use href="#para"/></svg>平行</button>
          </div>
        </div>
        <div class="label">约束<svg class="d"><use href="#down"/></svg></div>
      </section>

      <section class="group g-dim">
        <div class="tools">
          <button class="big"><svg><use href="#dim"/></svg>尺寸</button>
          <div class="col narrow">
            <button><svg class="i"><use href="#perim"/></svg>周长</button>
            <button><svg class="i"><use href="#base"/></svg>基线</button>
            <button><svg class="i"><use href="#ref"/></svg>参考</button>
          </div>
          <div class="col">
            <button><svg class="i"><use href="#brush"/></svg>公差刷</button>
            <button><svg class="i"><use href="#eraser"/></svg>删除公差</button>
          </div>
        </div>
        <div class="label">尺寸<svg class="d"><use href="#down"/></svg></div>
      </section>

      <section class="group g-check">
        <div class="tools">
          <button class="big"><svg><use href="#feat"/></svg>特征要求</button>
        </div>
        <div class="label">检查<svg class="d"><use href="#down"/></svg></div>
      </section>

      <section class="group g-close">
        <div class="tools">
          <button class="big"><svg><use href="#ok"/></svg>确定</button>
          <button class="big"><svg><use href="#cancel"/></svg>取消</button>
        </div>
        <div class="label">关闭</div>
      </section>
    </div>

    <div class="quickbar">
      <button><svg class="i"><use href="#list-doc"/></svg></button>
      <button><svg class="i"><use href="#list-doc"/></svg></button>
      <button><svg class="i"><use href="#list-check"/></svg></button>
      <button><svg class="i"><use href="#new"/></svg></button>
      <button><svg class="i"><use href="#open"/></svg></button>
      <button><svg class="i"><use href="#send"/></svg></button>
      <button><svg class="i"><use href="#newbrush"/></svg></button>
      <button><svg class="i"><use href="#save"/></svg></button>
      <button><svg class="i"><use href="#smile"/></svg></button>
      <button><svg class="i"><use href="#save2"/></svg></button>
      <button><svg class="i"><use href="#save2"/></svg></button>
      <button><svg class="i"><use href="#save3"/></svg></button>
      <button><svg class="i"><use href="#boxarr"/></svg></button>
      <button><svg class="i"><use href="#box"/></svg></button>
      <button><svg class="i"><use href="#preview"/></svg></button>
      <button class="on tol">±.01</button>
      <button><svg class="i"><use href="#undo"/></svg></button>
      <button class="drop off"><svg class="d"><use href="#down"/></svg></button>
      <button><svg class="i"><use href="#redo"/></svg></button>
      <button class="drop off"><svg class="d"><use href="#down"/></svg></button>
      <button><svg class="i"><use href="#gdoc"/></svg></button>
      <button><svg class="i"><use href="#print"/></svg></button>
      <button><svg class="i"><use href="#regen"/></svg></button>
      <button><svg class="i"><use href="#gball"/></svg></button>
      <button><svg class="i"><use href="#xout"/></svg></button>
      <button><svg class="i"><use href="#gbook"/></svg></button>
      <button><svg class="i"><use href="#gtri"/></svg></button>
      <button><svg class="i"><use href="#wire"/></svg></button>
      <button><svg class="i"><use href="#graph"/></svg></button>
      <button><svg class="i"><use href="#pdf"/></svg></button>
      <button><svg class="i"><use href="#pics"/></svg></button>
      <button><svg class="i"><use href="#curve1"/></svg></button>
      <button><svg class="i"><use href="#curve2"/></svg></button>
      <button><svg class="i"><use href="#curve3"/></svg></button>
      <button><svg class="i"><use href="#mesh"/></svg></button>
      <button><svg class="i"><use href="#gsurf"/></svg></button>
      <button><svg class="i"><use href="#draft"/></svg></button>
      <button><svg class="i"><use href="#ruler"/></svg></button>
      <button><svg class="i"><use href="#copy"/></svg></button>
      <button><svg class="i"><use href="#paste"/></svg></button>
      <button><svg class="i"><use href="#paste"/></svg></button>
      <button><svg class="i"><use href="#gsq"/></svg></button>
      <button><svg class="i"><use href="#gmir"/></svg></button>
      <button><svg class="i"><use href="#box"/></svg></button>
      <button><svg class="i"><use href="#gtree"/></svg></button>
      <button><svg class="i"><use href="#teapot"/></svg></button>
      <button><svg class="i"><use href="#photo"/></svg></button>
      <button><svg class="i"><use href="#moon"/></svg></button>
      <button><svg class="i"><use href="#gspl"/></svg></button>
      <button><svg class="i"><use href="#setup"/></svg></button>
      <button><svg class="i"><use href="#refs"/></svg></button>
      <button><svg class="i"><use href="#gwave"/></svg></button>
      <button><svg class="i"><use href="#pts"/></svg></button>
      <button><svg class="i"><use href="#plane"/></svg></button>
      <button><svg class="i"><use href="#axis"/></svg></button>
      <button><svg class="i"><use href="#gball"/></svg></button>
      <button><svg class="i"><use href="#geye-b"/></svg></button>
      <button><svg class="i"><use href="#geye-x"/></svg></button>
      <button><svg class="i"><use href="#geye"/></svg></button>
      <button><svg class="i"><use href="#rainbow"/></svg></button>
      <button class="deq">d=</button>
      <button><svg class="i"><use href="#fx"/></svg></button>
      <button><svg class="i"><use href="#ball"/></svg></button>
      <button><svg class="i"><use href="#bwave"/></svg></button>
      <button><svg class="i"><use href="#exit"/></svg></button>
      <button><svg class="i"><use href="#abox"/></svg></button>
      <button><svg class="i"><use href="#glist"/></svg></button>
      <button><svg class="i"><use href="#paren"/></svg></button>
      <button><svg class="i"><use href="#flag"/></svg></button>
      <button class="drop"><svg class="d"><use href="#down"/></svg></button>
      <button><svg class="i"><use href="#wins"/></svg></button>
      <button class="drop"><svg class="d"><use href="#down"/></svg></button>
      <button class="more"><svg class="d"><use href="#down"/></svg></button>
      <button class="more"><svg class="d"><use href="#down"/></svg></button>
      <button><svg class="i"><use href="#ball"/></svg></button>
      <span class="chev">›</span>
    </div>

    <main>
      <aside class="panel">
        <div class="panel-tabs">
          <button><svg class="i"><use href="#struct"/></svg></button>
          <button><svg class="i"><use href="#layers"/></svg></button>
        </div>
        <div class="panes">
          <div class="pane">
            <div class="pane-tools">
              <button><svg class="i"><use href="#gcube"/></svg></button>
              <svg class="dots"><use href="#dots"/></svg>
              <button><svg class="i"><use href="#rows"/></svg></button>
              <button><svg class="i"><use href="#rowsm"/></svg></button>
              <button><svg class="i"><use href="#cols"/></svg></button>
              <span class="sep"></span>
              <button class="guil">»</button>
              <button><svg class="i"><use href="#list-doc"/></svg></button>
            </div>
            <div class="search">
              <svg class="i"><use href="#filter"/></svg>
              <div class="field"><input type="text" aria-label="过滤模型树"><svg class="i"><use href="#times"/></svg></div>
              <button class="fdrop"><svg class="d"><use href="#down"/></svg></button>
              <button><svg class="i"><use href="#plus"/></svg></button>
            </div>
            <div class="blank"></div>
            <ul class="tree">
              <li><svg class="i"><use href="#cube"/></svg>123.PRT</li>
              <li class="l1 shut"><svg class="i"><use href="#design"/></svg>设计项</li>
              <li class="l1 exp"><svg class="i"><use href="#group"/></svg>LOCAL_GROUP</li>
              <li class="l2"><svg class="i"><use href="#plane-o"/></svg>FRONT</li>
              <li class="l2"><svg class="i"><use href="#plane-o"/></svg>RIGHT</li>
              <li class="l2"><svg class="i"><use href="#plane-o"/></svg>TOP</li>
              <li class="l2"><svg class="i"><use href="#csys-o"/></svg>DH_CSYS</li>
              <li class="l2"><svg class="i"><use href="#axis"/></svg>X</li>
              <li class="l2"><svg class="i"><use href="#axis"/></svg>Y</li>
              <li class="l2 last"><svg class="i"><use href="#axis"/></svg>Z</li>
              <li class="insert-here"></li>
              <li class="l1 leaf"><svg class="i"><use href="#sketch"/></svg><svg class="new"><use href="#star"/></svg>草绘 1</li>
            </ul>
          </div>
          <div class="pane second">
            <div class="pane-tools">
              <button><svg class="i"><use href="#stcube"/></svg></button>
              <svg class="dots"><use href="#dots"/></svg>
              <button><svg class="i"><use href="#rows"/></svg></button>
              <button><svg class="i"><use href="#rowsm"/></svg></button>
              <button class="on"><svg class="i"><use href="#cols-g"/></svg></button>
              <span class="sep"></span>
              <button class="on"><svg class="i"><use href="#cubeball"/></svg></button>
              <button class="on"><svg class="i"><use href="#cubeeye"/></svg></button>
              <span class="sep"></span>
              <button class="guil">»</button>
              <button><svg class="i"><use href="#list-doc"/></svg></button>
            </div>
            <div class="search">
              <svg class="i"><use href="#filter"/></svg>
              <div class="field"><input type="text" aria-label="过滤设计树"><svg class="i"><use href="#times"/></svg></div>
              <button class="fdrop"><svg class="d"><use href="#down"/></svg></button>
              <button><svg class="i"><use href="#plus"/></svg></button>
            </div>
            <ul class="tree">
              <li><svg class="i"><use href="#cube"/></svg>123.PRT</li>
              <li class="l1 exp"><svg class="i"><use href="#bodies"/></svg>主体 (1)</li>
              <li class="l2 leaf"><svg class="i"><use href="#bodystar"/></svg>主体 1</li>
            </ul>
          </div>
        </div>
      </aside>

      <div class="canvas">
        <svg class="drawing" viewBox="408 194 1507 823" preserveAspectRatio="xMidYMid slice">
          <circle cx="1187" cy="653" r="277" fill="#303" stroke="#903" stroke-width="4"/>
          <path d="M856 276.500h613V934.500H856z" fill="none" stroke="#963" stroke-width="1.500"/>
          <path d="M856 653h613M1187 276v658" stroke="#966" stroke-width="1.500"/>
          <path d="M408 653h1507" stroke="#cc0" stroke-width="2" stroke-dasharray="8 7"/>
          <path d="M1187 200v817" stroke="#cc0" stroke-width="2" stroke-dasharray="8 7"/>
          <path d="M1178 653h19M1187 643v19" stroke="#903" stroke-width="4"/>
          <path d="M802 346.500h59L1389 841" fill="none" stroke="#f03" stroke-width="2.500"/>
          <path d="M985 463l22 14-6 7zM1389 841l-21-13 5-7z" fill="#f03"/>
          <g fill="none" stroke="#f03" stroke-width="1.500"><circle cx="742" cy="346" r="6.500"/><path d="M737 355l11-18"/></g>
          <g class="dimtext"><text x="759" y="350">1.00</text></g>
          <g class="plane-names">
            <text x="1188" y="274">TOP</text>
            <text x="1469" y="649">RIGHT</text>
            <text x="856" y="931">FRONT</text>
          </g>
          <circle cx="1187.500" cy="634.500" r="7.500" fill="#fff"/>
          <path d="M1181 634.500h13" stroke="#678" stroke-width="1.500"/><circle cx="1186" cy="634.500" r="2.500" fill="#6bd"/>
          <circle cx="1169.500" cy="652.500" r="7.500" fill="#fff"/>
          <path d="M1169.500 646v13" stroke="#678" stroke-width="1.500"/><circle cx="1169.500" cy="654" r="2.500" fill="#6bd"/>
          <path d="M816 458v16l4-3 3 7 2-1-3-7h4z" fill="#fff"/>
        </svg>

        <div class="viewbar">
          <button><svg class="i"><use href="#fit"/></svg></button>
          <button><svg class="i"><use href="#zin"/></svg></button>
          <button><svg class="i"><use href="#zout"/></svg></button>
          <button><svg class="i"><use href="#repaint"/></svg></button>
          <button><svg class="i"><use href="#shade"/></svg></button>
          <button><svg class="i"><use href="#orient"/></svg></button>
          <button><svg class="i"><use href="#camera"/></svg></button>
          <button><svg class="i"><use href="#datums"/></svg></button>
          <button class="on"><svg class="i"><use href="#plane-o"/><use href="#eye"/></svg></button>
          <button><svg class="i"><use href="#axis-o"/><use href="#eye"/></svg></button>
          <button><svg class="i"><use href="#pts-o"/><use href="#eye"/></svg></button>
          <button><svg class="i"><use href="#csys-o"/><use href="#eye"/></svg></button>
          <button><svg class="i"><use href="#sview"/></svg></button>
          <button><svg class="i"><use href="#section"/></svg></button>
          <button><svg class="i"><use href="#persp"/></svg></button>
          <button><svg class="i"><use href="#dims"/><use href="#eye"/></svg></button>
          <button><svg class="i"><use href="#part"/><use href="#eye"/></svg></button>
          <button><svg class="i"><use href="#note"/><use href="#eye"/></svg></button>
          <button><svg class="i"><use href="#spin"/></svg></button>
        </div>
      </div>
    </main>

    <footer class="status">
      <p><span class="dot"></span>当约束处于活动状态时，可通过单击右键在锁定/禁用/启用约束之间切换。使用 Tab 键可切换活动约束。按住 Shift 键可禁用捕捉到新约束。</p>
      <p><span class="arrow"></span>选择圆的中心。</p>
    </footer>

    <!-- gif capture window -->
    <form class="capture">
      <div class="cap-title">
        <svg class="i"><use href="#gifcam"/></svg>
        <svg viewBox="0 0 12 12"><path d="M1 6.500h10" stroke="#000"/></svg>
        <svg viewBox="0 0 12 12"><path d="M1.500 1.500h9v9h-9z" fill="none" stroke="#ccc"/></svg>
        <svg viewBox="0 0 12 12"><path d="M1 1l10 10M11 1L1 11" stroke="#000"/></svg>
      </div>
      <div class="cap-menu"><a href="#">文件(F)</a><a href="#" class="dim">编辑(E)</a></div>
      <div class="cap-banner">Unregistered Copy</div>
      <div class="cap-buttons">
        <button type="button" disabled>开始</button>
        <button type="button" disabled>捕捉</button>
        <button type="button">停止</button>
      </div>
      <div class="cap-frames">0 帧 (0 字节)</div>
      <div class="cap-head">捕捉区域</div>
      <div class="cap-line">尺寸：1916x1049</div>
      <div class="cap-line">左上角：3,0</div>
      <div class="cap-area">
        <label><input type="checkbox">显示区域</label>
        <button type="button" disabled>选择区域</button>
      </div>
      <button type="button" class="refresh">刷新屏幕</button>
      <div class="cap-head second-head">捕捉选项</div>
      <div class="cap-sel">
        <label for="fps">帧数/秒：</label>
        <span class="pick"><select id="fps"><option>4 fps</option></select><svg class="d"><use href="#down"/></svg></span>
      </div>
      <label class="opt"><input type="checkbox" checked>透明</label>
      <label class="opt"><input type="checkbox" checked>记录时间信息</label>
      <label class="opt"><input type="checkbox" checked>循环</label>
      <label class="opt"><input type="checkbox" checked>描边</label>
      <label class="opt"><input type="checkbox" checked>捕捉光标</label>
      <label class="opt"><input type="checkbox" checked>Explorer 2.0 兼容</label>
      <div class="cap-sel scale">
        <label for="scale">录制比例：</label>
        <span class="pick"><select id="scale"><option>100%</option></select><svg class="d"><use href="#down"/></svg></span>
      </div>
    </form>

    <!-- input method bar -->
    <div class="ime">
      <svg class="ime-logo" viewBox="0 0 32 32"><path d="M1 5L24 0l7 24q-2 4-8 5L7 31z" fill="#f53"/><path d="M25 8Q14 4 9 8q-3 5 5 6 9 1 10 5-3 6-15 3" fill="none" stroke="#fff" stroke-width="5"/></svg>
      <button>中</button>
      <button><svg viewBox="0 0 16 16"><circle cx="5" cy="5" r="2" fill="none" stroke="#06c" stroke-width="1.500"/><path d="M10 8h3v3q-1 3-3 3 1-1 1-3h-1z"/></svg></button>
      <button><svg viewBox="0 0 16 16"><rect x="5" y="0" width="6" height="10" rx="3"/><path d="M2.500 7q0 5 5.500 5t5.500-5M8 12v3M5 15.200h6" fill="none" stroke="#06c" stroke-width="1.500"/></svg></button>
      <button><svg viewBox="0 0 16 16"><rect x="0" y="2" width="16" height="12" rx="1.500"/><path d="M2 5.500h12M2 8.500h12M3 11.500h10" stroke="#fff" stroke-width="1.500" stroke-dasharray="2 1"/></svg></button>
      <button><svg viewBox="0 0 16 16"><path d="M0 4l5-3q3 3 6 0l5 3-2 4-2-1v8H4V7L2 8z"/></svg></button>
      <button><svg viewBox="0 0 16 16"><path d="M3 1h10q3 2 3 6l-2 4q-1-1-3-1H5q-2 0-3 1L0 7q0-4 3-6z"/><path d="M3 5.500h4M5 3.500v4" stroke="#fff"/><circle cx="11" cy="5" r="1.200" fill="#fff"/><path d="M1 14h4M11 14h4" stroke="#06c" stroke-width="3"/></svg></button>
      <button><svg viewBox="0 0 16 16"><rect x="1" y="1" width="6" height="6" rx="1"/><rect x="1" y="9" width="6" height="6" rx="1"/><rect x="9" y="9" width="6" height="6" rx="1"/><rect x="9.700" y="1.700" width="4.600" height="4.600" rx="1" fill="none" stroke="#06c" stroke-width="1.500"/></svg></button>
      <button><svg viewBox="0 0 16 16"><path d="M8 0l2 3 4-1-1 4 3 2-3 2 1 4-4-1-2 3-2-3-4 1 1-4-3-2 3-2-1-4 4 1z"/><path d="M8 15V8M5.500 9q0-3 2.500-3t2.500 3" fill="none" stroke="#fff" stroke-width="1.500"/></svg></button>
    </div>

    <!-- network widget -->
    <div class="netpill">
      <svg class="wifi" viewBox="0 0 38 38"><circle cx="19" cy="19" r="19" fill="#3c6"/><g fill="none" stroke="#fff" stroke-width="2.500"><path d="M6 16q13-13 26 0M10 20.500q9-9 18 0M14 25q5-5 10 0"/></g><circle cx="19" cy="28.500" r="2" fill="#fff"/></svg>
      <div class="net-info">
        <div><svg viewBox="0 0 10 12"><path d="M3.500 0v11L0 8" fill="none" stroke="#0c6" stroke-width="2"/><path d="M6.500 12V1L10 4" fill="none" stroke="#f60" stroke-width="2"/></svg>0.00K/s</div>
        <div><svg viewBox="0 0 10 12"><path d="M1 2h3V0h2v2h3v10H1z" fill="#0c6"/><path d="M2.500 4h5v3h-5z" fill="#fff"/></svg>0</div>
      </div>
    </div>
  </body>
</html>
```
FILE: styles.css
```css
* {
  box-sizing: border-box;
}

body {
  margin: 0;
  height: 100vh;
  display: flex;
  flex-direction: column;
  position: relative;
  overflow: hidden;
  border: 1px solid #000;
  background: #fff;
  color: #444;
  font: 12px/16px "Noto Sans", "Noto Sans CJK SC", sans-serif;
}

button {
  display: flex;
  align-items: center;
  padding: 0;
  border: 0;
  background: none;
  color: inherit;
  font: inherit;
  white-space: nowrap;
}

button:disabled {
  color: #aaa;
}

a {
  color: inherit;
  text-decoration: none;
}

.sprite {
  position: absolute;
  width: 0;
  height: 0;
}

.i {
  width: 16px;
  height: 16px;
  flex: none;
}

.d {
  width: 8px;
  height: 5px;
  flex: none;
}

.on {
  background: #ccc;
  border: 1px solid #99c;
}

/* title + menu */
.titlebar {
  position: relative;
  height: 27px;
  padding-bottom: 3px;
  display: flex;
  align-items: center;
  justify-content: center;
}

.brand {
  position: absolute;
  left: 5px;
  top: 1px;
  display: flex;
  align-items: center;
  gap: 4px;
  font: 19px/22px Lato, sans-serif;
  color: #555;
}

.brand sup {
  font-size: 8px;
  line-height: 8px;
  vertical-align: 6px;
}

.doc-title {
  color: #aaa;
  font-size: 13px;
}

.menu {
  display: flex;
  justify-content: space-between;
  height: 29px;
  flex: none;
}

.tabs {
  width: 1736px;
  flex: 0 1 auto;
  display: grid;
  grid-template-columns: 62fr 74fr 86fr 74fr 88fr 102fr 112fr 74fr 98fr 74fr 72fr 92fr 72fr 100fr 72fr 100fr 110fr 102fr 96fr 76fr;
  background: #333;
  color: #fff;
  font-size: 13px;
  line-height: 29px;
  text-align: center;
  white-space: nowrap;
}

.tabs .file {
  background: linear-gradient(167deg, #6c3 70%, #693 71%);
}

.menu-end {
  width: 6px;
  background: #333;
}

/* ribbon */
.ribbon {
  display: flex;
  flex: none;
  height: 113px;
  border-bottom: 1px solid #8cc;
}

.group {
  position: relative;
  flex: none;
  padding-top: 1px;
}

.group::after {
  content: "";
  position: absolute;
  right: 0;
  top: 2px;
  bottom: 3px;
  width: 1px;
  background: linear-gradient(#ccc 25%, #999 26%, #999 75%, #ccc 76%);
}

.tools {
  display: flex;
  height: 84px;
}

.col {
  width: 66px;
  flex: none;
}

.col.narrow {
  width: 52px;
}

.col button {
  height: 28px;
  gap: 4px;
}

.col .d {
  margin-left: 3px;
}

.label {
  display: flex;
  justify-content: center;
  align-items: center;
  gap: 3px;
  height: 28px;
  padding-top: 2px;
}

.big {
  flex-direction: column;
  flex: 1;
  padding-top: 3px;
  line-height: 17px;
}

.big svg {
  width: 32px;
  height: 32px;
  margin-bottom: 11px;
}

.g-setup { width: 79px; }
.g-insert { width: 91px; }
.g-ops { width: 71px; }
.g-datum { width: 71px; }
.g-sketch { width: 398px; }
.g-sketch2 { width: 63px; }
.g-edit { width: 159px; }
.g-constrain { width: 163px; }
.g-dim { width: 175px; }
.g-check { width: 63px; }
.g-close { width: 87px; }

.g-setup .tools { padding-left: 3px; }
.g-insert .tools { padding: 0 5px 0 2px; }
.g-datum .tools { padding-left: 7px; }
.g-edit .tools,
.g-constrain .tools { padding-left: 7px; }
.g-close .tools { padding: 0 4px 0 3px; }

.g-sketch2 .big,
.g-check .big {
  padding-right: 2px;
}

.g-ops .tools { padding: 1px 4px 0 7px; }
.g-ops .col { width: 20px; }

.g-dim .big {
  flex: 0 0 47px;
  padding-right: 2px;
}

.constr {
  flex: 0 0 70px;
  padding-right: 8px;
  background: linear-gradient(#bbb, #bbb) 62px 1px / 1px 83px no-repeat;
}

.select-btn {
  flex: 1;
  flex-direction: column;
  background: #ccc;
  border: 1px solid #99c;
}

.select-btn .half {
  align-self: stretch;
  height: 40px;
  margin-bottom: 5px;
  border-bottom: 1px solid #99c;
}

.select-btn .d {
  margin-top: 6px;
}

.ptr {
  width: 16px;
  height: 28px;
  margin: 6px 4px 0 0;
}

/* quick access toolbar */
.quickbar {
  display: flex;
  flex: none;
  height: 24px;
  padding-right: 3px;
  border-bottom: 1px solid #8cc;
}

.quickbar button {
  width: 24px;
  flex: none;
  justify-content: center;
}

.quickbar button:first-child {
  width: 20px;
}

.quickbar .drop {
  width: 14px;
}

.quickbar .off {
  opacity: 0.5;
}

.quickbar .more {
  width: 22px;
  padding-bottom: 16px;
}

.quickbar .tol {
  font: 11px "Roboto", sans-serif;
}

.quickbar .deq {
  font: bold 14px "Open Sans", sans-serif;
  color: #222;
}

.quickbar .chev {
  margin-left: auto;
  line-height: 22px;
}

/* work area */
main {
  flex: 1;
  min-height: 0;
  display: flex;
}

.panel {
  flex: 0 0 407px;
}

.panel-tabs {
  display: flex;
  gap: 12px;
  height: 30px;
  padding: 5px 6px 9px;
}

.panes {
  display: flex;
}

.pane {
  flex: 0 0 168px;
}

.pane.second {
  flex: 1;
}

.pane-tools {
  display: flex;
  align-items: center;
  height: 24px;
  padding-left: 3px;
}

.second .pane-tools {
  padding-right: 8px;
}

.pane-tools button {
  width: 24px;
  height: 24px;
  justify-content: center;
}

.dots {
  width: 4px;
  height: 16px;
  margin-right: auto;
}

.sep {
  width: 1px;
  height: 24px;
  margin: 0 4px;
  background: #ccc;
}

.pane:first-child .sep {
  margin: 0 0 0 4px;
}

.pane-tools .guil {
  width: 23px;
  font-size: 16px;
  color: #222;
}

.search {
  display: flex;
  align-items: center;
  height: 29px;
  margin-top: 4px;
  padding-left: 8px;
}

.pane:first-child .search {
  padding-right: 1px;
}

.second .search {
  padding: 0 9px 0 7px;
}

.field {
  position: relative;
  flex: 1;
  min-width: 0;
  height: 29px;
  margin-left: 4px;
}

.field input {
  width: 100%;
  height: 29px;
  padding: 0 20px 0 4px;
  border: 1px solid #8cc;
  outline: none;
  font: inherit;
}

.field .i {
  position: absolute;
  right: 2px;
  top: 6px;
}

.search button {
  width: 24px;
  justify-content: center;
}

.search .fdrop {
  width: 18px;
}

.blank {
  height: 23px;
  margin: 5px 0 0 4px;
  border: solid #ccc;
  border-width: 0 1px 1px 0;
}

.tree {
  list-style: none;
  margin: 0;
  padding-left: 8px;
}

.second .tree {
  padding: 1px 0 0 7px;
}

.tree li {
  position: relative;
  display: flex;
  align-items: center;
  gap: 5px;
  height: 22px;
}

.tree .l1 {
  padding-left: 19px;
}

.tree .l2 {
  padding-left: 39px;
}

.tree .l2::before {
  content: "";
  position: absolute;
  left: 27px;
  top: 0;
  width: 1px;
  height: 22px;
  background: #ccc;
}

.tree .l2::after {
  content: "";
  position: absolute;
  left: 27px;
  top: 11px;
  width: 9px;
  height: 1px;
  background: #ccc;
}

.tree .last::before,
.tree .l2.leaf::before {
  height: 11px;
}

.tree .shut::before,
.tree .exp::before {
  content: "";
  position: absolute;
  left: 7px;
  top: 1px;
  width: 1px;
  height: 6px;
  background: #ccc;
}

.tree .shut::after {
  content: "";
  position: absolute;
  left: 5px;
  top: 7px;
  border: 4px solid transparent;
  border-left: 5px solid #666;
}

.tree .exp::after {
  content: "";
  position: absolute;
  left: 4px;
  top: 10px;
  border: 4px solid transparent;
  border-top: 5px solid #666;
}

.tree .l1.leaf::before {
  content: "";
  position: absolute;
  left: 7px;
  top: 0;
  width: 9px;
  height: 11px;
  border: solid #ccc;
  border-width: 0 0 1px 1px;
}

.tree .insert-here {
  height: 14px;
  margin-left: -1px;
}

.insert-here::before {
  content: "";
  width: 100%;
  height: 6px;
  border: solid #6c3;
  border-width: 0 2px;
  background: linear-gradient(#6c3, #6c3) 0 2px / 100% 2px no-repeat;
}

.tree .new {
  width: 8px;
  height: 8px;
  margin: 0 -4px 6px 0;
}

.canvas {
  position: relative;
  flex: 1;
  min-width: 0;
  background: #000;
}

.drawing {
  display: block;
  width: 100%;
  height: 100%;
}

.dimtext {
  fill: #f03;
  font: 12px "Liberation Mono", monospace;
}

.plane-names {
  fill: #963;
  font: 10px "Liberation Mono", monospace;
}

.viewbar {
  position: absolute;
  top: 7px;
  left: 50%;
  transform: translateX(-50%);
  display: flex;
  height: 32px;
  padding: 4px 2px;
  border: 1px solid #8cc;
  background: #fff;
}

.viewbar button {
  width: 26px;
  justify-content: center;
}

/* message area */
.status {
  flex: none;
  height: 31px;
  overflow: hidden;
  padding: 8px 0 0 90px;
  border-top: 1px solid #8cc;
  font-size: 11px;
}

.status p {
  display: flex;
  align-items: center;
  margin: 0;
}

.status .dot,
.status .arrow {
  width: 5px;
  height: 5px;
  margin: 0 5px 0 2px;
  border-radius: 3px;
  background: #069;
}

.status .arrow {
  height: 10px;
}

/* capture tool */
.capture {
  position: absolute;
  top: 4px;
  right: 5px;
  width: 156px;
  padding: 0 4px;
  border-top: 1px solid #888;
  background: #fff;
  box-shadow: 0 0 0 3px rgba(0, 0, 0, 0.2);
  color: #000;
  font: bold 12px/15px "Liberation Sans", "Noto Sans CJK SC", sans-serif;
}

.cap-title {
  display: flex;
  align-items: center;
  justify-content: space-between;
  height: 25px;
  padding-right: 14px;
}

.cap-title svg {
  width: 12px;
  height: 12px;
}

.cap-title .i {
  width: 16px;
  height: 16px;
  margin: 0 -16px 0 -1px;
}

.cap-menu {
  display: flex;
  gap: 13px;
  height: 25px;
  padding-left: 3px;
  font: 12px/20px "Noto Sans", "Noto Sans CJK SC", sans-serif;
}

.cap-menu .dim {
  color: #777;
}

.cap-banner {
  height: 25px;
  line-height: 19px;
  border: double #000;
  border-width: 3px 0;
  text-align: center;
}

.cap-buttons {
  display: flex;
  gap: 2px;
  margin-top: 3px;
}

.capture button {
  width: 45px;
  height: 22px;
  padding-bottom: 1px;
  justify-content: center;
  border: solid;
  border-width: 1px 2px 2px 1px;
  border-color: #ccc #777 #777 #ccc;
  font-size: 13px;
}

.cap-frames {
  height: 17px;
  line-height: 17px;
  font-size: 13px;
}

.cap-head {
  display: flex;
  align-items: center;
  gap: 3px;
  margin-top: 14px;
  font-size: 13px;
  line-height: 15px;
}

.cap-head::before,
.cap-head::after {
  content: "";
  width: 9px;
  height: 1px;
  background: #000;
}

.cap-head::after {
  flex: 1;
}

.second-head {
  margin-top: 18px;
}

.cap-line {
  font-size: 13px;
  line-height: 15px;
}

.cap-area {
  display: flex;
  align-items: center;
  justify-content: space-between;
  height: 24px;
  font-size: 13px;
}

.cap-area label,
.opt {
  display: flex;
  align-items: center;
  gap: 5px;
  font-size: 13px;
  padding-left: 1px;
  white-space: nowrap;
}

.cap-area button {
  width: 70px;
}

.capture .refresh {
  width: 71px;
  margin-top: 1px;
}

.capture input {
  appearance: none;
  position: relative;
  flex: none;
  width: 15px;
  height: 15px;
  margin: 0;
  border: solid;
  border-width: 2px 1px 1px 2px;
  border-color: #666 #ccc #ccc #666;
  background: #fff;
}

.capture input:checked::after {
  content: "";
  position: absolute;
  left: 4px;
  top: 0;
  width: 4px;
  height: 8px;
  border: solid #000;
  border-width: 0 2px 2px 0;
  transform: rotate(42deg);
}

.opt {
  height: 22px;
}

.cap-sel {
  display: flex;
  align-items: center;
  gap: 3px;
  height: 19px;
  font-size: 13px;
}

.cap-sel.scale {
  height: 22px;
  gap: 1px;
}

.pick {
  position: relative;
}

.pick select {
  appearance: none;
  display: block;
  width: 60px;
  height: 16px;
  padding: 0 0 0 13px;
  border: 1px solid #000;
  border-radius: 0;
  background: #fff;
  box-shadow: 2px 2px 0 #000;
  color: #000;
  font: bold 12px/14px "Liberation Sans", sans-serif;
}

.scale .pick select {
  width: 56px;
}

.pick .d {
  position: absolute;
  right: 4px;
  top: 4px;
  height: 8px;
  filter: brightness(0);
}

/* ime toolbar */
.ime {
  position: absolute;
  right: -1px;
  top: 786px;
  display: flex;
  height: 27px;
  padding-left: 24px;
  border: solid #ccc;
  border-width: 1px 0;
  background: #fff;
}

.ime button {
  width: 24px;
  justify-content: center;
  color: #06c;
  font-weight: bold;
  font-size: 16px;
}

.ime button svg {
  width: 16px;
  height: 16px;
  fill: #06c;
}

.ime .ime-logo {
  position: absolute;
  left: -8px;
  top: -5px;
  width: 32px;
  height: 32px;
}

/* network speed */
.netpill {
  position: absolute;
  right: 85px;
  bottom: 27px;
  display: flex;
  align-items: center;
  gap: 6px;
  width: 120px;
  height: 50px;
  padding-left: 6px;
  border-radius: 25px;
  background: #fff;
  box-shadow: 0 7px 0 -1px rgba(0, 0, 0, 0.2);
  color: #666;
  font: 11px/20px "Noto Sans", sans-serif;
}

.wifi {
  width: 38px;
  height: 38px;
}

.net-info div {
  display: flex;
  align-items: center;
  gap: 4px;
}

.net-info svg {
  width: 10px;
  height: 12px;
}
```
